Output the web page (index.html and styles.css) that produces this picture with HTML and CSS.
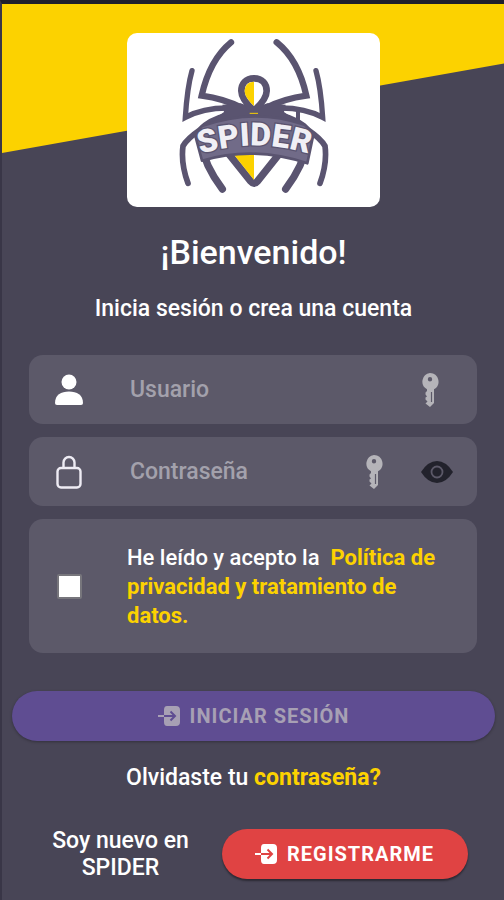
FILE: index.html
```html
<!DOCTYPE html>
<html lang="es">
<head>
    <meta charset="UTF-8">
    <meta name="viewport" content="width=device-width, initial-scale=1.0">
    <title>Spider - Iniciar sesión</title>
    <link rel="stylesheet" href="styles.css">
</head>
<body>
    <main class="login">
        <div class="logo-card">
            <svg class="logo" viewBox="175 40 450 465" role="img" aria-label="Spider">
                <!-- Patas -->
                <g fill="none" stroke="#5a5470" stroke-linecap="round" stroke-linejoin="miter">
                    <path stroke-width="19" d="M331 53C286 90 257 150 243 213Q310 222 365 250"/>
                    <path stroke-width="19" d="M468 53C514 90 543 150 557 213Q490 222 435 250"/>
                    <path stroke-width="16" d="M214 138C202 180 197 230 194 278Q250 248 330 250"/>
                    <path stroke-width="16" d="M586 138C598 180 603 230 606 278Q550 248 470 250"/>
                    <path stroke-width="17" d="M320 272Q265 285 235 318Q200 342 187 364Q180 415 202 476"/>
                    <path stroke-width="17" d="M480 272Q535 285 565 318Q600 342 613 364Q620 415 598 476"/>
                    <path stroke-width="22" d="M240 350C248 405 272 450 305 493"/>
                    <path stroke-width="22" d="M560 350C552 405 528 450 495 493"/>
                    <path stroke-width="12" d="M532 256V290"/>
                </g>
                <!-- Cuerpo -->
                <path fill="#5a5470" d="M305 240L360 236L400 250L440 236L495 240L490 262L530 290H270L310 262Z"/>
                <path fill="#fff" stroke="#5a5470" stroke-width="20" d="M400 161C375 161 362 178 362 199C362 220 380 240 400 258C420 240 438 220 438 199C438 178 425 161 400 161Z"/>
                <path fill="#fcd200" d="M400 171C382 171 372 183 372 199C372 214 385 230 400 244Z"/>
                <path stroke="#fcd200" stroke-width="3" d="M387 266H412"/>
                <path fill="#fff" stroke="#5a5470" stroke-width="22" stroke-linejoin="round" d="M318 380L390 470Q400 482 410 470L482 380Z"/>
                <path fill="#fcd200" d="M336 385H400V466Z"/>
                <!-- Cinta con el nombre -->
                <path fill="#716b88" stroke="#5a5470" stroke-width="8" stroke-linejoin="round" d="M223 330L244 304Q400 248 552 300L578 330L560 416Q400 362 244 408Z"/>
                <path id="name-curve" fill="none" d="M234 391Q400 335 570 389"/>
                <text class="logo-name" text-anchor="middle"><textPath href="#name-curve" startOffset="50%">SPIDER</textPath></text>
            </svg>
        </div>

        <h1>¡Bienvenido!</h1>
        <p class="subtitle">Inicia sesión o crea una cuenta</p>

        <form id="login-form" class="login-form">
            <div class="field">
                <label class="field-icon" for="usuario" aria-label="Usuario">
                    <svg width="30" height="32" viewBox="0 0 30 32" fill="#fff">
                        <circle cx="15" cy="8" r="7.5"/>
                        <path d="M1 29C1 21 7 17.500 15 17.500S29 21 29 29Q29 31 27 31H3Q1 31 1 29Z"/>
                    </svg>
                </label>
                <input type="text" id="usuario" name="usuario" placeholder="Usuario">
                <svg class="key" viewBox="0 0 18 34">
                    <path fill="#b5b4b9" fill-rule="evenodd" d="M9 0A8.700 8.700 0 0 1 13 16.300V30L9 34L4.500 30.500L6.500 28.500L4.500 26.500V24.500L6 23.500L4.500 21.500V19.500L6 18V16.300A8.700 8.700 0 0 1 9 0ZM9 4A2.200 2.200 0 1 0 9 8.400A2.200 2.200 0 0 0 9 4Z"/>
                    <path stroke="#5c5969" stroke-width="1.200" d="M10.500 19V29"/>
                </svg>
            </div>

            <div class="field">
                <label class="field-icon" for="clave" aria-label="Contraseña">
                    <svg width="26" height="34" viewBox="0 0 26 34" fill="none" stroke="#eeecf4" stroke-width="2.400">
                        <rect x="1.500" y="13" width="23" height="19.500" rx="3.500"/>
                        <path d="M7.500 13V7.500A5.500 5.500 0 0 1 18.500 7.500V13"/>
                    </svg>
                </label>
                <input type="password" id="clave" name="clave" placeholder="Contraseña">
                <svg class="key" viewBox="0 0 18 34">
                    <path fill="#b5b4b9" fill-rule="evenodd" d="M9 0A8.700 8.700 0 0 1 13 16.300V30L9 34L4.500 30.500L6.500 28.500L4.500 26.500V24.500L6 23.500L4.500 21.500V19.500L6 18V16.300A8.700 8.700 0 0 1 9 0ZM9 4A2.200 2.200 0 1 0 9 8.400A2.200 2.200 0 0 0 9 4Z"/>
                    <path stroke="#5c5969" stroke-width="1.200" d="M10.500 19V29"/>
                </svg>
                <button type="button" class="toggle-password" aria-label="Mostrar contraseña">
                    <svg width="32" height="22" viewBox="0 0 32 22">
                        <path fill="#22222c" d="M0 11Q7 0 16 0T32 11Q25 22 16 22T0 11Z"/>
                        <circle cx="16" cy="11" r="5.500" fill="none" stroke="#5c5969" stroke-width="1.800"/>
                    </svg>
                </button>
            </div>

            <div class="field terms">
                <input type="checkbox" id="acepto" name="acepto">
                <label for="acepto">He leído y acepto la &nbsp;<a href="#politica">Política de privacidad y tratamiento de datos.</a></label>
            </div>
        </form>

        <button type="submit" form="login-form" class="button button-login" disabled>
            <svg class="enter" viewBox="0 0 22 20">
                <path fill="currentColor" d="M9 0H18Q22 0 22 4V16Q22 20 18 20H9Q6 20 6 16V11H0V9H6V4Q6 0 9 0Z"/>
                <path class="enter-arrow" d="M6 10H17M12.500 5.500L17 10L12.500 14.500"/>
            </svg>
            INICIAR SESIÓN
        </button>

        <p class="forgot">Olvidaste tu <a href="#recuperar">contraseña?</a></p>

        <div class="register">
            <p>Soy nuevo en SPIDER</p>
            <button type="button" class="button button-register">
                <svg class="enter" viewBox="0 0 22 20">
                    <path fill="currentColor" d="M9 0H18Q22 0 22 4V16Q22 20 18 20H9Q6 20 6 16V11H0V9H6V4Q6 0 9 0Z"/>
                    <path class="enter-arrow" d="M6 10H17M12.500 5.500L17 10L12.500 14.500"/>
                </svg>
                REGISTRARME
            </button>
        </div>
    </main>
</body>
</html>
```
FILE: styles.css
```css
* {
    box-sizing: border-box;
}

body {
    margin: 0;
    min-height: 100vh;
    font-family: Roboto, sans-serif;
    font-size: 23px;
    font-weight: 500;
    line-height: 29px;
    color: #fff;
    background: #484556;
    border-top: 4px solid #20202c;
    border-left: 2px solid #393647;
}

.login {
    position: relative;
    padding: 29px 9px 16px 10px;
}

/* Franja amarilla en diagonal */
.login::before {
    content: "";
    position: absolute;
    top: 0;
    left: 0;
    width: 100%;
    height: 149px;
    background: #fcd200;
    clip-path: polygon(0 0, 100% 0, 100% 40%, 0 100%);
}

.logo-card {
    position: relative;
    display: flex;
    justify-content: center;
    width: 253px;
    margin: 0 auto;
    padding: 5px 0 14px;
    background: #fff;
    border-radius: 10px;
}

.logo {
    width: 150px;
    height: 155px;
}

.logo-name {
    font-family: Roboto, sans-serif;
    font-size: 96px;
    font-weight: 900;
    fill: #f0eff5;
    stroke: #5a5470;
    stroke-width: 8px;
    paint-order: stroke;
}

h1 {
    margin: 24px 0 0;
    font-size: 34px;
    font-weight: 500;
    line-height: 42px;
    text-align: center;
}

.subtitle {
    margin: 21px 0 0;
    text-align: center;
}

a {
    color: #fcd200;
    font-weight: 700;
    text-decoration: none;
}

.login-form {
    display: flex;
    flex-direction: column;
    gap: 13px;
    margin: 32px 18px 38px 17px;
}

.field {
    display: flex;
    align-items: center;
    min-height: 69px;
    padding: 0 24px 0 20px;
    background: #5c5969;
    border-radius: 14px;
}

.field-icon {
    display: flex;
    justify-content: center;
    width: 40px;
    margin-right: 41px;
}

.field input[type="text"],
.field input[type="password"] {
    flex: 1;
    min-width: 0;
    padding: 0;
    border: 0;
    outline: 0;
    background: none;
    color: #fff;
    font: inherit;
}

.field input::placeholder {
    color: #a3a1ac;
    opacity: 1;
}

.key {
    width: 18px;
    height: 34px;
    margin: 0 14px;
}

.toggle-password {
    display: flex;
    margin-left: 24px;
    padding: 0;
    border: 0;
    background: none;
}

.terms {
    min-height: 134px;
    padding: 0 22px 0 28px;
    font-size: 22px;
}

.terms input {
    appearance: none;
    flex: none;
    width: 25px;
    height: 25px;
    margin: 0 45px 0 0;
    background: #fff;
    border: 2px solid #77767c;
    border-radius: 2px;
}

.terms input:checked {
    background: #fcd200;
}

.button {
    display: flex;
    align-items: center;
    justify-content: center;
    gap: 10px;
    height: 50px;
    border: 0;
    border-radius: 25px;
    color: #fff;
    font-family: inherit;
    font-size: 20px;
    font-weight: 500;
    letter-spacing: 1px;
}

.button-login {
    width: 100%;
    background: #5f4d92;
    color: #a7a0b4;
    font-weight: 700;
    box-shadow: 0 1px 3px rgba(0, 0, 0, 0.3);
}

.button-register {
    width: 246px;
    background: #e04343;
    font-weight: 700;
    box-shadow: 0 2px 2px rgba(0, 0, 0, 0.4);
}

.enter {
    width: 22px;
    height: 20px;
}

.enter-arrow {
    fill: none;
    stroke: #5f4d92;
    stroke-width: 2;
}

.button-register .enter-arrow {
    stroke: #e04343;
}

.forgot {
    margin: 22px 0 0;
    text-align: center;
}

.register {
    display: flex;
    align-items: center;
    justify-content: center;
    gap: 24px;
    margin-top: 35px;
    padding-left: 4px;
}

.register p {
    width: 154px;
    margin: 0;
    line-height: 27px;
    text-align: center;
}
```
